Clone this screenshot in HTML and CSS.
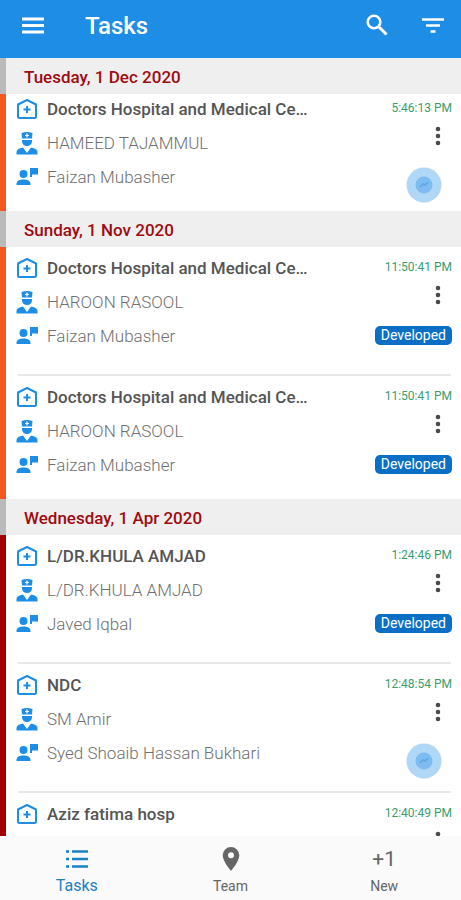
FILE: index.html
```html
<!DOCTYPE html>
<html lang="en">
<head>
<meta charset="utf-8">
<meta name="viewport" content="width=device-width, initial-scale=1">
<title>Tasks</title>
<link rel="stylesheet" href="styles.css">
</head>
<body>
<svg class="defs" aria-hidden="true">
  <symbol id="hospital" viewBox="0 0 22 22">
    <path d="M2 6.500 11 2l9 4.500V18.500a1.500 1.500 0 0 1-1.500 1.500h-15A1.500 1.500 0 0 1 2 18.500Z" fill="none" stroke="currentColor" stroke-width="2" stroke-linejoin="round"/>
    <path d="M11 8v7M7.500 11.500h7" stroke="currentColor" stroke-width="2"/>
  </symbol>
  <symbol id="doctor" viewBox="0 0 22 24">
    <path fill="currentColor" fill-rule="evenodd" d="M5.500 2Q11 0 16.500 2L16 7.500H6ZM10.400 2.600v1.300H9.100v1.200h1.300v1.300h1.200V5.100h1.300V3.900h-1.300V2.600Z"/>
    <path fill="currentColor" d="M6 9h10v1.500a5 4.500 0 0 1-10 0ZM.500 23.500V21q0-3.500 6.500-4.500l4 5.500 4-5.500q6.500 1 6.500 4.500v2.500Z"/>
  </symbol>
  <symbol id="assignee" viewBox="0 0 22 22">
    <path fill="currentColor" d="M7.500 4a4 4 0 1 1 0 8 4 4 0 0 1 0-8ZM.500 19v-1.500c0-5.500 14-5.500 14 0V19ZM14 2h8.500v6.500H16V11h-2Z"/>
  </symbol>
  <symbol id="more" viewBox="0 0 24 24">
    <path fill="currentColor" d="M12 2.700a2.300 2.300 0 1 1 0 4.600 2.300 2.300 0 0 1 0-4.600Zm0 7a2.300 2.300 0 1 1 0 4.600 2.300 2.300 0 0 1 0-4.600Zm0 7a2.300 2.300 0 1 1 0 4.600 2.300 2.300 0 0 1 0-4.600Z"/>
  </symbol>
  <symbol id="pulse" viewBox="0 0 36 36">
    <circle cx="18" cy="18" r="17.500" fill="#b1d7f7"/>
    <circle cx="18" cy="18" r="8.500" fill="#7dbcf0"/>
    <path d="m14 20 3-3 2 1 3-3" fill="none" stroke="#5aa8e8" stroke-width="1.500"/>
  </symbol>
</svg>

<header class="bar">
  <button class="icon-button" aria-label="Menu">
    <svg viewBox="0 0 24 24"><path d="M1 5h22M1 11.500h22M1 18h22" stroke="currentColor" stroke-width="2.800"/></svg>
  </button>
  <h1 class="bar-title">Tasks</h1>
  <button class="icon-button" aria-label="Search">
    <svg viewBox="0 0 24 24"><circle cx="9" cy="8" r="6.300" fill="none" stroke="currentColor" stroke-width="2.600"/><path d="m13 12 8.500 8.500" stroke="currentColor" stroke-width="3"/></svg>
  </button>
  <button class="icon-button" aria-label="Filter">
    <svg viewBox="0 0 24 24"><path d="M1 5.500h22M5 11.500h14M9.500 17.500h5" stroke="currentColor" stroke-width="2.600"/></svg>
  </button>
</header>

<main class="list">
  <section class="group high tight">
    <h2 class="date">Tuesday, 1 Dec 2020</h2>
    <article class="task">
      <div class="lines">
        <h3 class="line place"><svg><use href="#hospital"/></svg>Doctors Hospital and Medical Ce…</h3>
        <p class="line"><svg><use href="#doctor"/></svg>HAMEED TAJAMMUL</p>
        <p class="line"><svg><use href="#assignee"/></svg>Faizan Mubasher</p>
      </div>
      <div class="side">
        <time class="time">5:46:13 PM</time>
        <button class="more" aria-label="More"><svg><use href="#more"/></svg></button>
        <svg class="pulse"><use href="#pulse"/></svg>
      </div>
    </article>
  </section>

  <section class="group high">
    <h2 class="date">Sunday, 1 Nov 2020</h2>
    <article class="task">
      <div class="lines">
        <h3 class="line place"><svg><use href="#hospital"/></svg>Doctors Hospital and Medical Ce…</h3>
        <p class="line"><svg><use href="#doctor"/></svg>HAROON RASOOL</p>
        <p class="line"><svg><use href="#assignee"/></svg>Faizan Mubasher</p>
      </div>
      <div class="side">
        <time class="time">11:50:41 PM</time>
        <button class="more" aria-label="More"><svg><use href="#more"/></svg></button>
        <span class="badge">Developed</span>
      </div>
    </article>
    <article class="task">
      <div class="lines">
        <h3 class="line place"><svg><use href="#hospital"/></svg>Doctors Hospital and Medical Ce…</h3>
        <p class="line"><svg><use href="#doctor"/></svg>HAROON RASOOL</p>
        <p class="line"><svg><use href="#assignee"/></svg>Faizan Mubasher</p>
      </div>
      <div class="side">
        <time class="time">11:50:41 PM</time>
        <button class="more" aria-label="More"><svg><use href="#more"/></svg></button>
        <span class="badge">Developed</span>
      </div>
    </article>
  </section>

  <section class="group urgent">
    <h2 class="date">Wednesday, 1 Apr 2020</h2>
    <article class="task">
      <div class="lines">
        <h3 class="line place"><svg><use href="#hospital"/></svg>L/DR.KHULA AMJAD</h3>
        <p class="line"><svg><use href="#doctor"/></svg>L/DR.KHULA AMJAD</p>
        <p class="line"><svg><use href="#assignee"/></svg>Javed Iqbal</p>
      </div>
      <div class="side">
        <time class="time">1:24:46 PM</time>
        <button class="more" aria-label="More"><svg><use href="#more"/></svg></button>
        <span class="badge">Developed</span>
      </div>
    </article>
    <article class="task">
      <div class="lines">
        <h3 class="line place"><svg><use href="#hospital"/></svg>NDC</h3>
        <p class="line"><svg><use href="#doctor"/></svg>SM Amir</p>
        <p class="line"><svg><use href="#assignee"/></svg>Syed Shoaib Hassan Bukhari</p>
      </div>
      <div class="side">
        <time class="time">12:48:54 PM</time>
        <button class="more" aria-label="More"><svg><use href="#more"/></svg></button>
        <svg class="pulse"><use href="#pulse"/></svg>
      </div>
    </article>
    <article class="task">
      <div class="lines">
        <h3 class="line place"><svg><use href="#hospital"/></svg>Aziz fatima hosp</h3>
      </div>
      <div class="side">
        <time class="time">12:40:49 PM</time>
        <button class="more" aria-label="More"><svg><use href="#more"/></svg></button>
      </div>
    </article>
  </section>
</main>

<nav class="tabs">
  <a class="tab active" href="#tasks">
    <svg viewBox="0 0 24 24"><path d="M7 4.500h16M7 12h16M7 19.500h16M1 4.500h3M1 12h3M1 19.500h3" stroke="currentColor" stroke-width="2.400"/></svg>
    Tasks
  </a>
  <a class="tab" href="#team">
    <svg viewBox="0 0 24 24"><path fill="currentColor" fill-rule="evenodd" d="M12 0a8.300 8.300 0 0 0-8.300 8.300C3.700 14.500 12 24 12 24s8.300-9.500 8.300-15.700A8.300 8.300 0 0 0 12 0Zm0 5.300a3 3 0 1 1 0 6 3 3 0 0 1 0-6Z"/></svg>
    Team
  </a>
  <a class="tab" href="#new">
    <span class="plus">+1</span>
    New
  </a>
</nav>
</body>
</html>
```
FILE: styles.css
```css
* {
  box-sizing: border-box;
}

body {
  margin: 0;
  height: 100vh;
  display: flex;
  flex-direction: column;
  background: #fff;
  color: #707070;
  font-family: Roboto, "Liberation Sans", sans-serif;
}

h1, h2, h3, p {
  margin: 0;
}

button {
  padding: 0;
  border: 0;
  background: none;
  color: inherit;
}

.defs {
  display: none;
}

.bar {
  flex: none;
  height: 58px;
  display: flex;
  align-items: center;
  gap: 32px;
  padding: 0 16px 6px 21px;
  background: #1e8de6;
  color: #fff;
}

.icon-button,
.icon-button svg {
  display: block;
  width: 24px;
  height: 24px;
}

.bar-title {
  flex: 1;
  padding-left: 8px;
  font-size: 24px;
  font-weight: 500;
  line-height: 32px;
}

.list {
  flex: 1;
  min-height: 0;
  overflow: hidden;
}

.date {
  height: 36px;
  padding-left: 18px;
  border-left: 6px solid #bababa;
  background: #efefef;
  color: #a00a10;
  font-size: 17px;
  font-weight: 500;
  line-height: 38px;
}

.task {
  display: flex;
  justify-content: space-between;
  padding: 9px 9px 0 10px;
  border-left: 6px solid #f4581f;
}

.tight .task {
  padding-top: 3px;
}

.urgent .task {
  border-left-color: #a30000;
}

.lines {
  display: flex;
  flex-direction: column;
  gap: 10px;
  padding-bottom: 22px;
}

.task:not(:last-child) .lines {
  padding-bottom: 26px;
}

.task:not(:last-child) {
  background: linear-gradient(#e8e8e8, #e8e8e8) 12px 100% / calc(100% - 22px) 2px no-repeat;
  padding-bottom: 2px;
}

.line {
  height: 24px;
  display: flex;
  align-items: center;
  gap: 9px;
  font-size: 17px;
  font-weight: 300;
  white-space: nowrap;
}

.line svg {
  width: 22px;
  height: 24px;
  color: #1e8de6;
  overflow: visible;
}

.place {
  color: #555;
  font-weight: 500;
}

.side {
  display: flex;
  flex-direction: column;
  align-items: flex-end;
}

.time {
  color: #3a9d6c;
  font-size: 12px;
  line-height: 22px;
}

.more {
  width: 28px;
  height: 24px;
  margin: 5px 0 19px;
  color: #4a4a4a;
}

.more svg {
  display: block;
  width: 28px;
  height: 24px;
}

.badge {
  padding: 0 6px;
  border-radius: 5px;
  background: #0b6fc6;
  color: #fff;
  font-size: 14px;
  line-height: 19px;
}

.pulse {
  width: 36px;
  height: 36px;
  margin-right: 10px;
}

.tabs {
  flex: none;
  height: 64px;
  display: flex;
  background: #fafafa;
}

.tab {
  flex: 1;
  display: flex;
  flex-direction: column;
  align-items: center;
  justify-content: flex-end;
  gap: 5px;
  padding-bottom: 4px;
  color: #666;
  font-size: 14px;
  line-height: 20px;
  text-decoration: none;
}

.tab svg {
  width: 24px;
  height: 24px;
}

.tab.active {
  color: #1a80c4;
  font-size: 16px;
}

.plus {
  font-size: 21px;
  line-height: 24px;
}
```
